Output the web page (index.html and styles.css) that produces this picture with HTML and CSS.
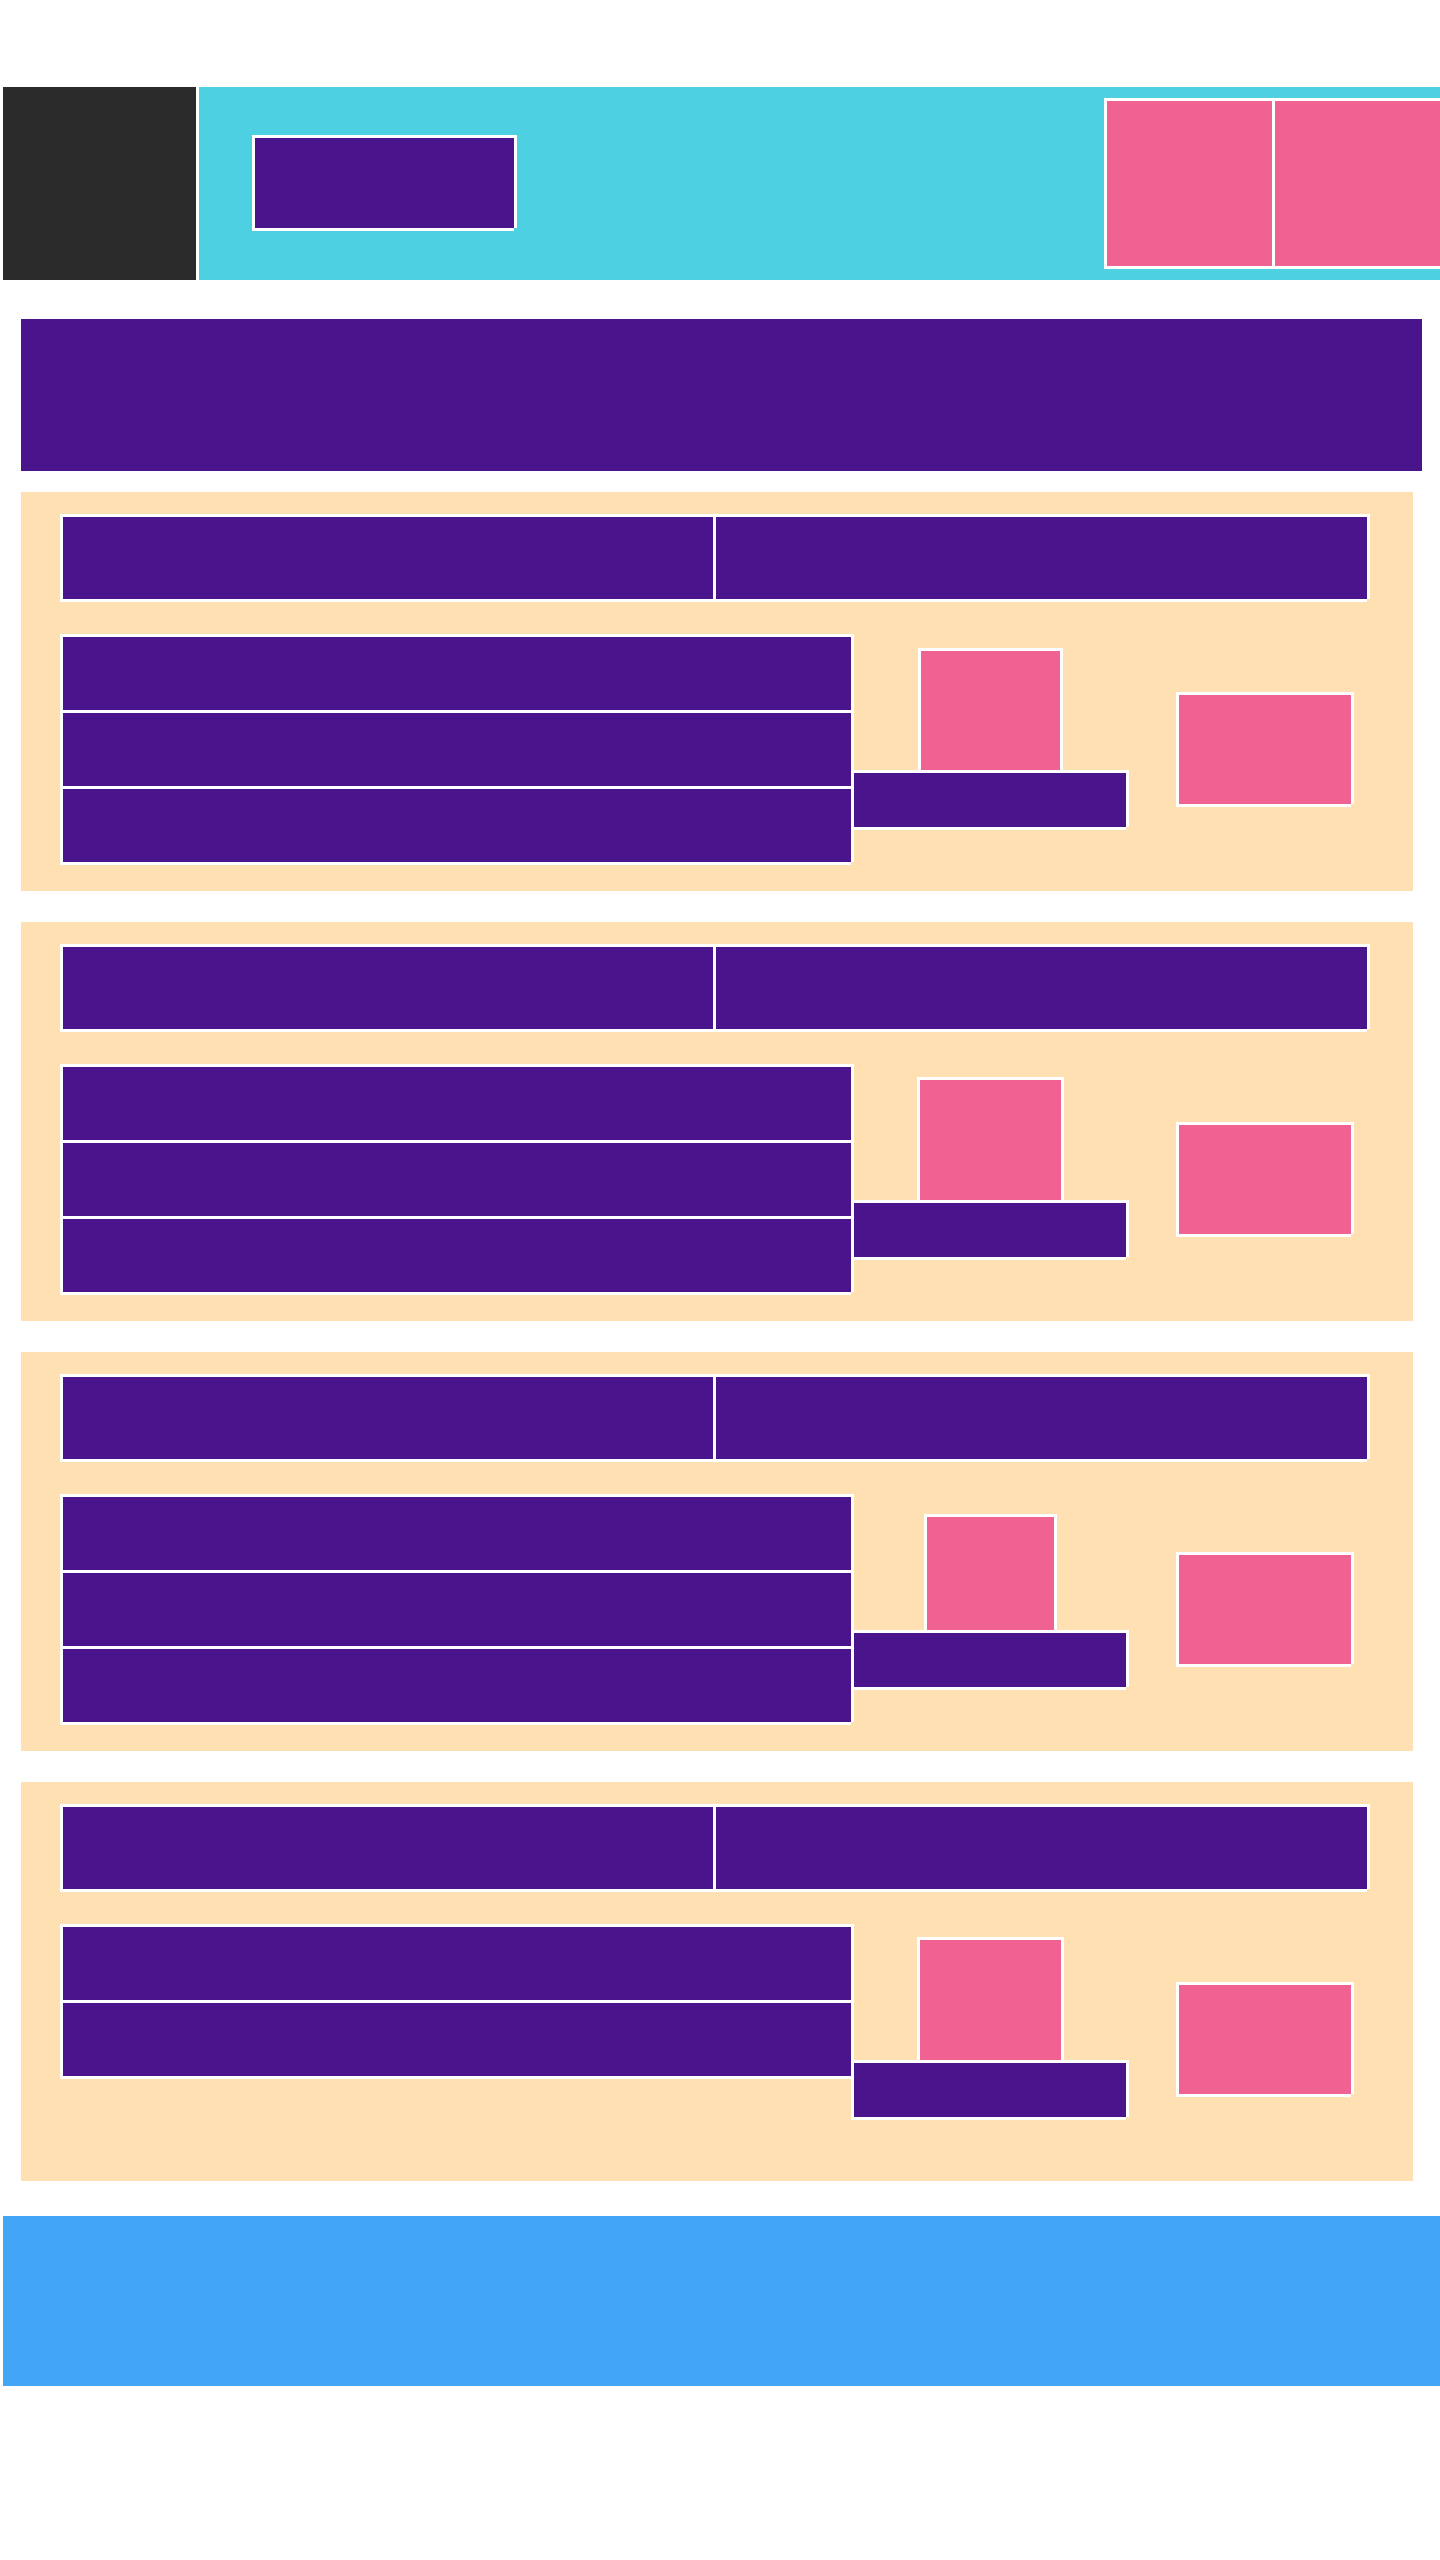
FILE: index.html
```html
<!DOCTYPE html>
<html>
	<head>
		<title>Layout</title>
		<meta charset="utf-8">
		<link rel="stylesheet" href="styles.css">
	</head>
	<body>
		<div class="page">
			<div class="header">
				<div class="logo"></div>
				<div class="nav">
					<div class="nav_btn ol"></div>
					<div class="nav_actions">
						<div class="nav_icon ol"></div>
						<div class="nav_icon ol"></div>
					</div>
				</div>
			</div>

			<div class="banner"></div>

			<ul class="cards">
				<li class="card">
					<div class="card_head">
						<div class="cell cell_left ol"></div>
						<div class="cell ol"></div>
					</div>
					<div class="card_body">
						<div class="rows">
							<div class="row ol"></div>
							<div class="row ol"></div>
							<div class="row ol"></div>
						</div>
						<div class="media">
							<div class="thumb thumb_1 ol"></div>
							<div class="bar ol"></div>
						</div>
						<div class="preview ol"></div>
					</div>
				</li>
				<li class="card">
					<div class="card_head">
						<div class="cell cell_left ol"></div>
						<div class="cell ol"></div>
					</div>
					<div class="card_body">
						<div class="rows">
							<div class="row ol"></div>
							<div class="row ol"></div>
							<div class="row ol"></div>
						</div>
						<div class="media">
							<div class="thumb thumb_2 ol"></div>
							<div class="bar ol"></div>
						</div>
						<div class="preview ol"></div>
					</div>
				</li>
				<li class="card">
					<div class="card_head">
						<div class="cell cell_left ol"></div>
						<div class="cell ol"></div>
					</div>
					<div class="card_body">
						<div class="rows">
							<div class="row ol"></div>
							<div class="row ol"></div>
							<div class="row ol"></div>
						</div>
						<div class="media">
							<div class="thumb thumb_3 ol"></div>
							<div class="bar ol"></div>
						</div>
						<div class="preview ol"></div>
					</div>
				</li>
				<li class="card">
					<div class="card_head">
						<div class="cell cell_left ol"></div>
						<div class="cell ol"></div>
					</div>
					<div class="card_body">
						<div class="rows">
							<div class="row ol"></div>
							<div class="row ol"></div>
						</div>
						<div class="media">
							<div class="thumb thumb_2 ol"></div>
							<div class="bar ol"></div>
						</div>
						<div class="preview ol"></div>
					</div>
				</li>
			</ul>

			<div class="footer"></div>
		</div>
	</body>
</html>
```

FILE: styles.css
```css
* {
	box-sizing: border-box;
}
body, ul, li {
	margin: 0;
	padding: 0;
}
li {
	list-style: none;
}
body {
	background: #fff;
	font-family: "Liberation Sans", Arial, sans-serif;
}

/* white frame round a block, bottom-right corner left open */
.ol {
	box-shadow: -3px -3px 0 #fff, 3px -3px 0 #fff, -3px 3px 0 #fff, 3px 0 0 #fff, 0 3px 0 #fff;
}

.page {
	padding: 87px 0 0 3px;
}

.header {
	display: flex;
	width: 1437px;
	height: 193px;
}
.logo {
	width: 193px;
	background-color: #2b2b2b;
}
.nav {
	flex: 1;
	margin-left: 3px;
	background-color: #4dd0e1;
	display: flex;
	align-items: flex-start;
	padding-left: 56px;
}
.nav_btn {
	width: 259px;
	height: 90px;
	margin-top: 51px;
	background-color: #4a148c;
}
.nav_actions {
	margin-left: auto;
	margin-top: 14px;
	display: flex;
	gap: 3px;
}
.nav_icon {
	width: 165px;
	height: 165px;
	background-color: #f06292;
}

.banner {
	width: 1401px;
	height: 152px;
	margin: 39px 0 0 18px;
	background-color: #4a148c;
}

.cards {
	margin: 21px 0 0 18px;
	display: flex;
	flex-direction: column;
	gap: 31px;
}
.card {
	width: 1392px;
	height: 399px;
	padding: 25px 46px 0 42px;
	background-color: #ffe0b2;
}
.card_head {
	display: flex;
	gap: 3px;
	height: 82px;
}
.card_head .cell {
	flex: 1;
	background-color: #4a148c;
}
.card_head .cell_left {
	flex: none;
	width: 650px;
}

.card_body {
	display: flex;
	align-items: flex-start;
	margin-top: 38px;
}
.rows {
	width: 788px;
	display: flex;
	flex-direction: column;
	gap: 3px;
}
.row {
	height: 73px;
	background-color: #4a148c;
}

.media {
	width: 272px;
	height: 190px;
	margin-left: 3px;
	display: flex;
	flex-direction: column;
	justify-content: flex-end;
	align-items: center;
	gap: 3px;
}
.thumb {
	background-color: #f06292;
}
.thumb_1 {
	width: 139px;
	height: 119px;
}
.thumb_2 {
	width: 141px;
	height: 120px;
}
.thumb_3 {
	width: 127px;
	height: 113px;
}
.bar {
	width: 272px;
	height: 54px;
	flex: none;
	background-color: #4a148c;
}
.preview {
	width: 172px;
	height: 109px;
	margin: 58px 0 0 53px;
	background-color: #f06292;
}

.footer {
	width: 1437px;
	height: 170px;
	margin-top: 35px;
	background-color: #42a5f5;
}
```
